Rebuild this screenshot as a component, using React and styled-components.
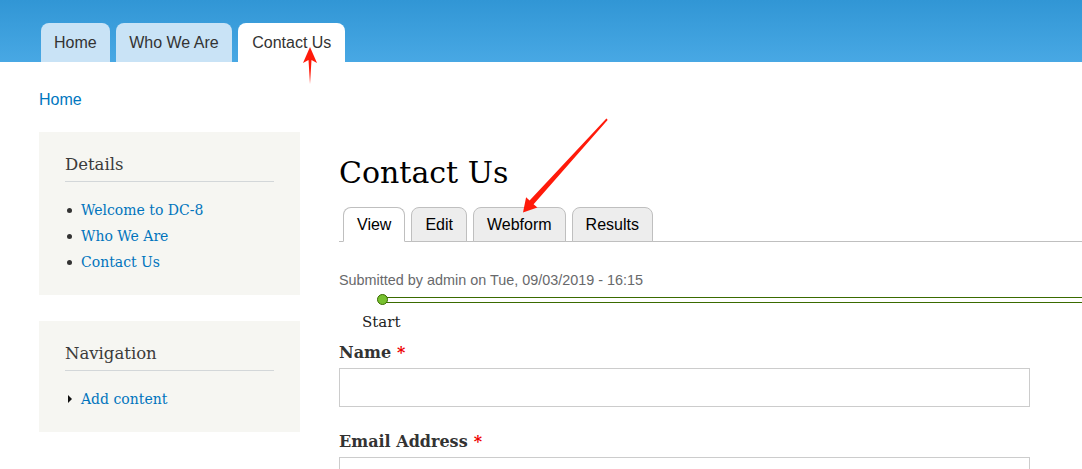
import React from "react";
import styled, { createGlobalStyle } from "styled-components";

const Global = createGlobalStyle`
  html, body { margin: 0; padding: 0; background: #fff; }
  body { font-family: "Liberation Sans", Arial, sans-serif; overflow: hidden; }
  * { box-sizing: border-box; }
`;

const Page = styled.div`
  position: relative;
  width: 1082px;
  height: 469px;
  overflow: hidden;
`;

const Header = styled.header`
  height: 62px;
  background: linear-gradient(to bottom, #3196d5, #48a8e4);
  display: flex;
  align-items: flex-end;
  gap: 6px;
  padding-left: 41px;
`;

const TopTab = styled.a`
  display: flex;
  align-items: center;
  height: 39px;
  padding: 1px ${(p) => p.$pad}px 0;
  border-radius: 8px 8px 0 0;
  background: ${(p) => (p.$active ? "#fff" : "#c9e3f6")};
  color: #333;
  font-size: 16px;
  text-decoration: none;
`;

const Content = styled.div`
  padding: 0 0 0 39px;
`;

const Breadcrumb = styled.a`
  display: block;
  margin-top: 28px;
  color: #0077c0;
  font-size: 16px;
  line-height: 20px;
  text-decoration: none;
`;

const Columns = styled.div`
  display: flex;
  gap: 39px;
  margin-top: 22px;
`;

const Sidebar = styled.aside`
  width: 261px;
  flex: none;
  display: flex;
  flex-direction: column;
  gap: 26px;
`;

const Block = styled.section`
  background: #f6f6f2;
  padding: 22px 26px 20px 26px;
`;

const BlockTitle = styled.h2`
  margin: 0;
  font-family: "DejaVu Serif", Georgia, serif;
  font-weight: normal;
  font-size: 16.5px;
  line-height: 22px;
  color: #3b3b3b;
  padding-bottom: 5px;
  border-bottom: 1px solid #d3d7d9;
`;

const List = styled.ul`
  margin: 15px 0 0 0;
  padding: 0;
  list-style: none;
`;

const Item = styled.li`
  display: flex;
  align-items: center;
  height: 26px;
  font-family: "DejaVu Serif", Georgia, serif;
  font-size: 14px;
  &::before {
    content: "";
    flex: none;
    margin: 0 9px 0 ${(p) => (p.$arrow ? 3 : 2)}px;
    ${(p) =>
      p.$arrow
        ? `width: 0; height: 0; border-left: 4px solid #111; border-top: 4px solid transparent; border-bottom: 4px solid transparent;`
        : `width: 5px; height: 5px; border-radius: 50%; background: #333;`}
  }
`;

const Link = styled.a`
  color: #0074bd;
  text-decoration: none;
`;

const Main = styled.main`
  flex: 1;
  min-width: 0;
  padding-top: 21px;
`;

const Title = styled.h1`
  margin: 0;
  font-family: "DejaVu Serif", Georgia, serif;
  font-weight: normal;
  font-size: 30px;
  line-height: 40px;
  color: #000;
`;

const LocalTabs = styled.nav`
  display: flex;
  gap: 6px;
  margin-top: 14px;
  padding-left: 4px;
  border-bottom: 1px solid #bfbfbf;
  height: 35px;
  align-items: flex-end;
`;

const LocalTab = styled.a`
  display: flex;
  align-items: center;
  height: 35px;
  margin-bottom: -1px;
  padding: 0 ${(p) => p.$pad}px;
  border: 1px solid #bfbfbf;
  border-bottom: ${(p) => (p.$active ? "1px solid #fff" : "1px solid #bfbfbf")};
  border-radius: 8px 8px 0 0;
  background: ${(p) => (p.$active ? "#fff" : "#ededed")};
  color: #000;
  font-size: 16px;
  text-decoration: none;
`;

const Submitted = styled.div`
  margin-top: 29px;
  font-size: 14.4px;
  line-height: 18px;
  color: #68696b;
`;

const Progress = styled.div`
  position: relative;
  margin-top: 8px;
  margin-left: 43px;
  height: 6px;
  border: 1px solid #3a6b00;
  border-right: none;
  background: #fff;
`;

const Dot = styled.span`
  position: absolute;
  left: -6px;
  top: -4px;
  width: 11px;
  height: 11px;
  border-radius: 50%;
  background: #77c12f;
  border: 1px solid #3a6b00;
`;

const StepLabel = styled.div`
  margin-left: 23px;
  margin-top: 9px;
  font-family: "DejaVu Serif", Georgia, serif;
  font-size: 15px;
  line-height: 20px;
  color: #222;
`;

const Field = styled.div`
  margin-top: ${(p) => p.$mt}px;
`;

const Label = styled.label`
  display: block;
  font-family: "DejaVu Serif", Georgia, serif;
  font-weight: bold;
  font-size: 16px;
  line-height: 20px;
  color: #333;
`;

const Req = styled.span`
  color: #e00;
  margin-left: 6px;
`;

const Input = styled.div`
  width: 691px;
  height: 39px;
  margin-top: 5px;
  border: 1px solid #cccccc;
  background: #fff;
`;

const Overlay = styled.svg`
  position: absolute;
  left: 0;
  top: 0;
  pointer-events: none;
`;

export default function App() {
  return (
    <Page>
      <Global />
      <Header>
        <TopTab $pad={13}>Home</TopTab>
        <TopTab $pad={13.5}>Who We Are</TopTab>
        <TopTab $pad={14} $active>
          Contact Us
        </TopTab>
      </Header>
      <Content>
        <Breadcrumb>Home</Breadcrumb>
        <Columns>
          <Sidebar>
            <Block>
              <BlockTitle>Details</BlockTitle>
              <List>
                <Item>
                  <Link>Welcome to DC-8</Link>
                </Item>
                <Item>
                  <Link>Who We Are</Link>
                </Item>
                <Item>
                  <Link>Contact Us</Link>
                </Item>
              </List>
            </Block>
            <Block>
              <BlockTitle>Navigation</BlockTitle>
              <List>
                <Item $arrow>
                  <Link>Add content</Link>
                </Item>
              </List>
            </Block>
          </Sidebar>
          <Main>
            <Title>Contact Us</Title>
            <LocalTabs>
              <LocalTab $pad={13} $active>
                View
              </LocalTab>
              <LocalTab $pad={13}>Edit</LocalTab>
              <LocalTab $pad={13}>Webform</LocalTab>
              <LocalTab $pad={13}>Results</LocalTab>
            </LocalTabs>
            <Submitted>Submitted by admin on Tue, 09/03/2019 - 16:15</Submitted>
            <Progress>
              <Dot />
            </Progress>
            <StepLabel>Start</StepLabel>
            <Field $mt={11}>
              <Label>
                Name<Req>*</Req>
              </Label>
              <Input />
            </Field>
            <Field $mt={25}>
              <Label>
                Email Address<Req>*</Req>
              </Label>
              <Input />
            </Field>
          </Main>
        </Columns>
      </Content>
      <Overlay width="1082" height="469" viewBox="0 0 1082 469">
        <polygon points="310,47 317,63 311.5,60 310,84 308.5,60 303,63" fill="#ff1a0a" />
        <polygon
          points="607,119 607.6,120 533.6,204.2 537.4,207.6 523,212.5 526.1,197.2 529.6,200.4 606.4,118.5"
          fill="#ff1a0a"
        />
      </Overlay>
    </Page>
  );
}
